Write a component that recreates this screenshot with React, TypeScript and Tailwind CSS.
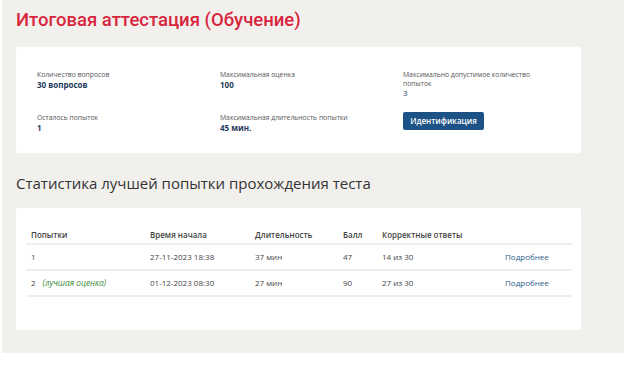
import React from "react";

const rows = [
  { n: "1", best: false, start: "27-11-2023 18:38", dur: "37 мин", score: "47", correct: "14 из 30" },
  { n: "2", best: true, start: "01-12-2023 08:30", dur: "27 мин", score: "90", correct: "27 из 30" },
];

function Item({ label, value, bold = true }: { label: string; value: string; bold?: boolean }) {
  return (
    <div>
      <div className="text-[6.8px] leading-[8.5px] text-[#555]">{label}</div>
      <div className={"text-[8px] leading-[10px] text-[#1e3a5c] " + (bold ? "font-bold" : "font-normal")}>{value}</div>
    </div>
  );
}

export default function App() {
  return (
    <div className="w-[624px] h-[366px] bg-white" style={{ fontFamily: '"Open Sans", sans-serif' }}>
      <div className="ml-[2px] h-[353px] bg-[#f2f0ed] pl-[14px] pr-[43px] pt-[9px]">
        <h1 className="text-[18.5px] leading-[22px] font-medium text-[#d7263d]" style={{ fontFamily: 'Roboto, sans-serif' }}>
          Итоговая аттестация (Обучение)
        </h1>
        <div className="mt-[16px] h-[106px] bg-white rounded-[2px] pl-[21px] pt-[24px]">
          <div className="grid grid-cols-[183px_183px_140px]">
            <Item label="Количество вопросов" value="30 вопросов" />
            <Item label="Максимальная оценка" value="100" />
            <Item label="Максимально допустимое количество попыток" value="3" bold={false} />
            <div className="mt-[16px]">
              <Item label="Осталось попыток" value="1" />
            </div>
            <div className="mt-[16px]">
              <Item label="Максимальная длительность попытки" value="45 мин." />
            </div>
            <div className="mt-[14px]">
              <button className="block w-[81px] h-[18px] rounded-[2px] bg-[#1c5286] text-white text-[8px] leading-[18px] font-semibold">
                Идентификация
              </button>
            </div>
          </div>
        </div>
        <h2 className="mt-[20px] text-[15px] leading-[20px] text-[#333]">
          Статистика лучшей попытки прохождения теста
        </h2>
        <div className="mt-[15px] h-[122px] bg-white rounded-[2px] px-[10px] pt-[19px]">
          <table className="w-[546px] text-[8px] text-[#444] border-collapse">
            <thead>
              <tr className="h-[17px] border-b-2 border-[#eeeeee]">
                <th className="text-left font-semibold pl-[5px] w-[124px]">Попытки</th>
                <th className="text-left font-semibold w-[105px]">Время начала</th>
                <th className="text-left font-semibold w-[88px]">Длительность</th>
                <th className="text-left font-semibold w-[39px]">Балл</th>
                <th className="text-left font-semibold w-[123px]">Корректные ответы</th>
                <th></th>
              </tr>
            </thead>
            <tbody>
              {rows.map((r) => (
                <tr key={r.n} className="h-[26px] border-b-2 border-[#eeeeee]">
                  <td className="pl-[5px]">
                    {r.n}
                    {r.best && <span className="ml-[7px] italic text-[#3a8a3a] text-[8.3px]">(лучшая оценка)</span>}
                  </td>
                  <td>{r.start}</td>
                  <td>{r.dur}</td>
                  <td>{r.score}</td>
                  <td>{r.correct}</td>
                  <td className="text-[#2d5d8a]">Подробнее</td>
                </tr>
              ))}
            </tbody>
          </table>
        </div>
      </div>
    </div>
  );
}
